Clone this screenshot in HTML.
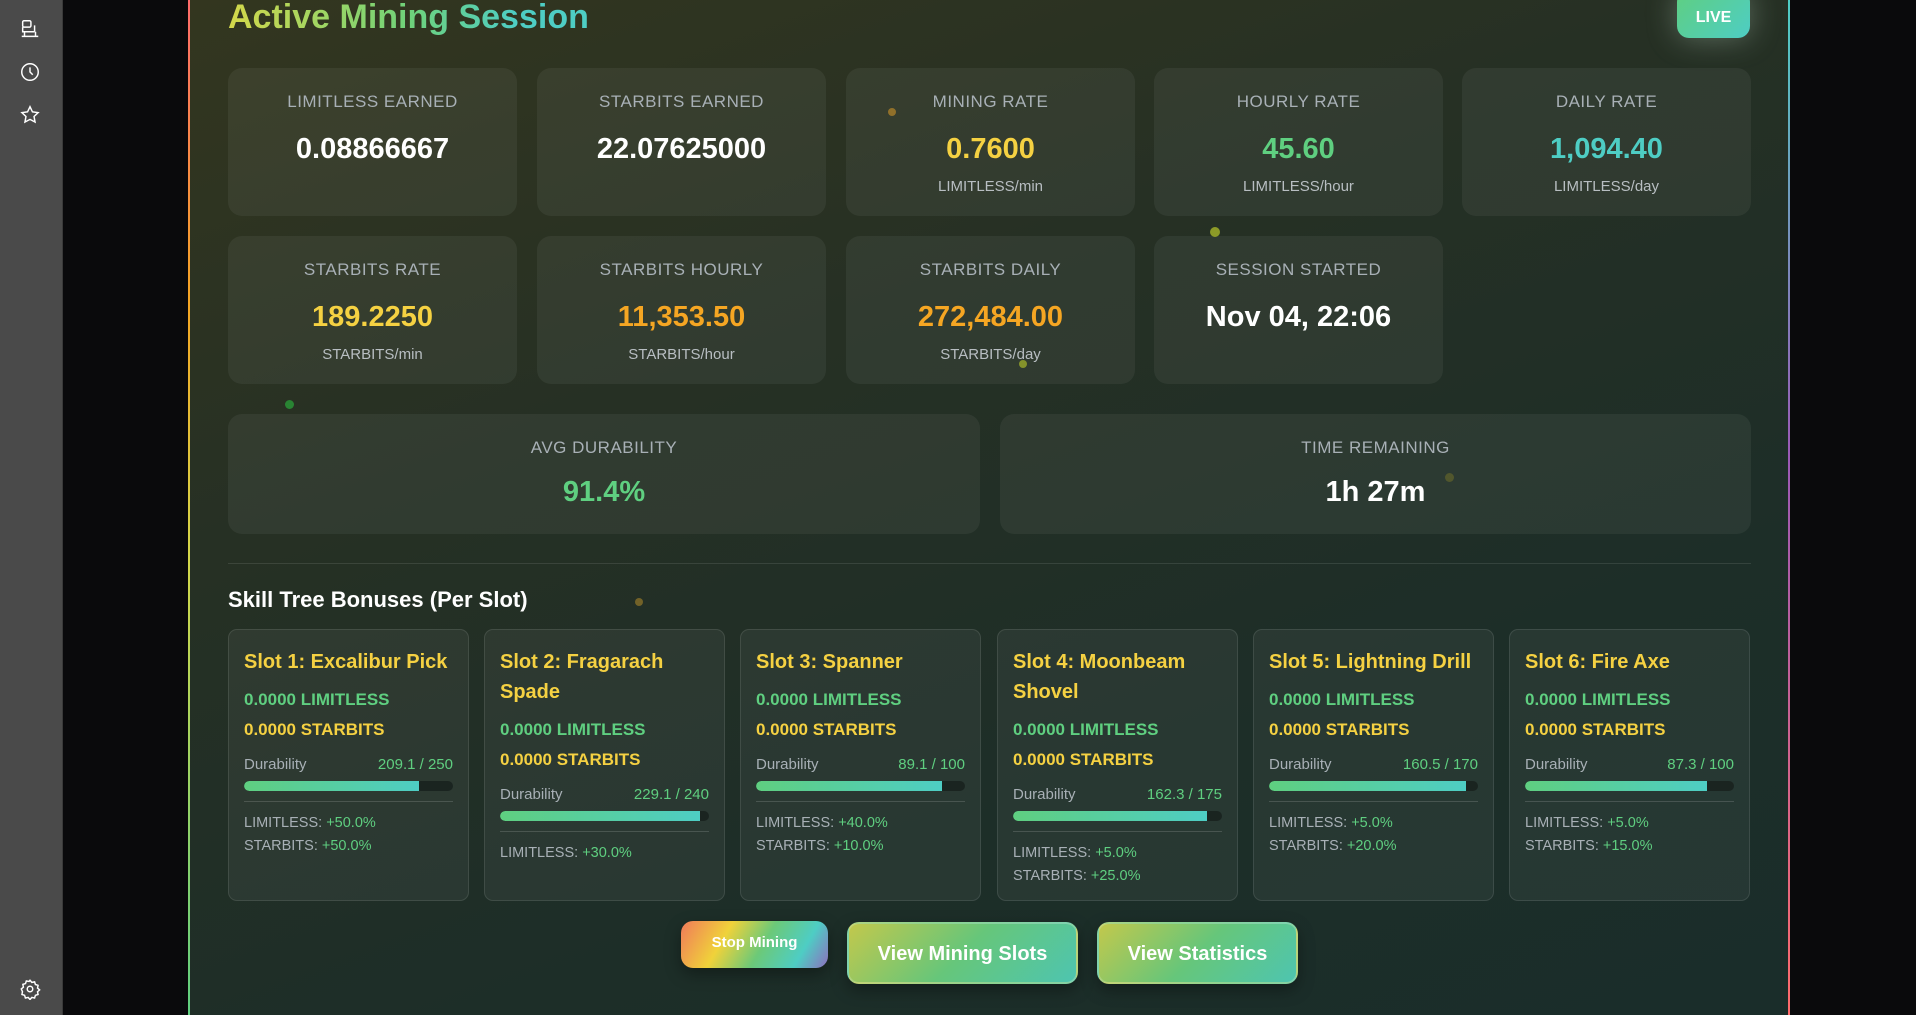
<!DOCTYPE html>
<html><head><meta charset="utf-8"><style>
*{box-sizing:border-box;margin:0;padding:0}
body{width:1916px;height:1015px;overflow:hidden;background:#0a0a0c;font-family:"Liberation Sans",sans-serif;position:relative}
.side{position:absolute;left:0;top:0;width:63px;height:1015px;background:#4a4a4a;border-right:1px solid #3a3a3a}
.side svg{position:absolute;left:19px;width:22px;height:22px;fill:none;stroke:#fff;stroke-width:1.6}
.lb{position:absolute;left:188px;top:0;width:2px;height:1015px;background:linear-gradient(#ff6b6b,#f5a623 30%,#d4d84a 55%,#5fcf80)}
.rb{position:absolute;left:1788px;top:0;width:2px;height:1015px;background:linear-gradient(#4ecdc4,#9b59b6 45%,#ff6b6b)}
.panel{position:absolute;left:190px;top:0;width:1598px;height:1015px;background:linear-gradient(160deg,#33361f 0%,#263024 35%,#1d2e28 70%,#1a2d2a 100%)}
.title{position:absolute;left:228px;top:-2px;font-size:34px;font-weight:bold;background:linear-gradient(90deg,#d4d84a,#6fd27a 50%,#4ecdc4 80%);-webkit-background-clip:text;color:transparent}
.live{position:absolute;left:1677px;top:-10px;width:73px;height:48px;border-radius:12px;background:linear-gradient(135deg,#5fcf80,#4ecdc4);color:#fff;font-weight:bold;font-size:16px;text-align:center;line-height:56px;box-shadow:0 0 30px rgba(200,230,210,.35)}
.card{position:absolute;width:289px;height:148px;border-radius:14px;background:rgba(255,255,255,.055);text-align:center}
.lab{position:absolute;left:0;right:0;top:93px;font-size:17px;color:#a8b0b6;letter-spacing:.5px}
.card .lab{top:24px}
.val{position:absolute;left:0;right:0;top:65px;font-size:29px;font-weight:bold;color:#fff}
.sub{position:absolute;left:0;right:0;top:110px;font-size:15px;color:#b8bec2}
.hr{position:absolute;left:228px;top:563px;width:1523px;height:1px;background:rgba(255,255,255,.1)}
.h2{position:absolute;left:228px;top:587px;font-size:22px;font-weight:bold;color:#fff}
.slot{position:absolute;top:629px;width:241px;height:272px;border-radius:9px;background:rgba(255,255,255,.05);border:1px solid rgba(255,255,255,.1);padding:17px 15px}
.st{font-size:20px;font-weight:bold;color:#f5d142;line-height:30px;margin-bottom:8px}
.l{font-size:17px;font-weight:bold;line-height:30px}
.g{color:#5fcf80}.y{color:#f5d142}.t{color:#4ecdc4}.o{color:#f5a623}
.dr{display:flex;justify-content:space-between;font-size:15px;color:#a8b0b6;margin-top:10px;line-height:20px}
.dr span:last-child{color:#5fcf80}
.bar{height:10px;border-radius:5px;background:#1a2420;margin-top:6px;overflow:hidden}
.bar div{height:100%;border-radius:5px 0 0 5px;background:linear-gradient(90deg,#5fcf80,#4ecdc4)}
.sep{height:1px;background:rgba(255,255,255,.15);margin-top:10px;margin-bottom:10px}
.b{font-size:14.5px;color:#a8b0b6;line-height:23px}
.b span{color:#5fcf80}
.btn{position:absolute;color:#fff;font-weight:bold;text-align:center;border-radius:12px;box-shadow:0 6px 16px rgba(0,0,0,.35)}
.dot{position:absolute;border-radius:50%}
</style></head><body>
<div class="side">
<svg style="top:18px" viewBox="0 0 24 24"><rect x="4" y="3" width="9" height="7" rx="1.5"/><path d="M4 10v5h13M17 8v7M3 20h18M6 15v5M18 15v5"/></svg>
<svg style="top:61px" viewBox="0 0 24 24"><circle cx="12" cy="12" r="9"/><path d="M12 7v5l3 3"/></svg>
<svg style="top:104px" viewBox="0 0 24 24"><path d="M12 3l2.7 5.6 6.1.8-4.4 4.2 1.1 6.1L12 16.8 6.5 19.7l1.1-6.1L3.2 9.4l6.1-.8z"/></svg>
<svg style="top:978px" viewBox="0 0 24 24"><circle cx="12" cy="12" r="3"/><path d="M12 2.5l2 2.3 3-.6.9 2.9 2.9.9-.6 3 2.3 2-2.3 2 .6 3-2.9.9-.9 2.9-3-.6-2 2.3-2-2.3-3 .6-.9-2.9-2.9-.9.6-3L2.5 12l2.3-2-.6-3 2.9-.9.9-2.9 3 .6z"/></svg>
</div>
<div class="panel"></div>
<div class="lb"></div><div class="rb"></div>
<div class="title">Active Mining Session</div>
<div class="live">LIVE</div>

<div class="card" style="left:228px;top:68px"><div class="lab">LIMITLESS EARNED</div><div class="val">0.08866667</div></div>
<div class="card" style="left:537px;top:68px"><div class="lab">STARBITS EARNED</div><div class="val">22.07625000</div></div>
<div class="card" style="left:846px;top:68px"><div class="lab">MINING RATE</div><div class="val y">0.7600</div><div class="sub">LIMITLESS/min</div></div>
<div class="card" style="left:1154px;top:68px"><div class="lab">HOURLY RATE</div><div class="val g">45.60</div><div class="sub">LIMITLESS/hour</div></div>
<div class="card" style="left:1462px;top:68px"><div class="lab">DAILY RATE</div><div class="val t">1,094.40</div><div class="sub">LIMITLESS/day</div></div>

<div class="card" style="left:228px;top:236px"><div class="lab">STARBITS RATE</div><div class="val y">189.2250</div><div class="sub">STARBITS/min</div></div>
<div class="card" style="left:537px;top:236px"><div class="lab">STARBITS HOURLY</div><div class="val o">11,353.50</div><div class="sub">STARBITS/hour</div></div>
<div class="card" style="left:846px;top:236px"><div class="lab">STARBITS DAILY</div><div class="val o">272,484.00</div><div class="sub">STARBITS/day</div></div>
<div class="card" style="left:1154px;top:236px"><div class="lab">SESSION STARTED</div><div class="val">Nov 04, 22:06</div></div>

<div class="card" style="left:228px;top:414px;width:752px;height:120px"><div class="lab">AVG DURABILITY</div><div class="val g" style="top:62px">91.4%</div></div>
<div class="card" style="left:1000px;top:414px;width:751px;height:120px"><div class="lab">TIME REMAINING</div><div class="val" style="top:62px">1h 27m</div></div>

<div class="hr"></div>
<div class="h2">Skill Tree Bonuses (Per Slot)</div>

<div class="slot" style="left:228px"><div class="st">Slot 1: Excalibur Pick</div><div class="l g">0.0000 LIMITLESS</div><div class="l y">0.0000 STARBITS</div><div class="dr"><span>Durability</span><span>209.1 / 250</span></div><div class="bar"><div style="width:83.6%"></div></div><div class="sep"></div><div class="b">LIMITLESS: <span>+50.0%</span></div><div class="b">STARBITS: <span>+50.0%</span></div></div>
<div class="slot" style="left:484px"><div class="st">Slot 2: Fragarach Spade</div><div class="l g">0.0000 LIMITLESS</div><div class="l y">0.0000 STARBITS</div><div class="dr"><span>Durability</span><span>229.1 / 240</span></div><div class="bar"><div style="width:95.5%"></div></div><div class="sep"></div><div class="b">LIMITLESS: <span>+30.0%</span></div></div>
<div class="slot" style="left:740px"><div class="st">Slot 3: Spanner</div><div class="l g">0.0000 LIMITLESS</div><div class="l y">0.0000 STARBITS</div><div class="dr"><span>Durability</span><span>89.1 / 100</span></div><div class="bar"><div style="width:89.1%"></div></div><div class="sep"></div><div class="b">LIMITLESS: <span>+40.0%</span></div><div class="b">STARBITS: <span>+10.0%</span></div></div>
<div class="slot" style="left:997px"><div class="st">Slot 4: Moonbeam Shovel</div><div class="l g">0.0000 LIMITLESS</div><div class="l y">0.0000 STARBITS</div><div class="dr"><span>Durability</span><span>162.3 / 175</span></div><div class="bar"><div style="width:92.7%"></div></div><div class="sep"></div><div class="b">LIMITLESS: <span>+5.0%</span></div><div class="b">STARBITS: <span>+25.0%</span></div></div>
<div class="slot" style="left:1253px"><div class="st">Slot 5: Lightning Drill</div><div class="l g">0.0000 LIMITLESS</div><div class="l y">0.0000 STARBITS</div><div class="dr"><span>Durability</span><span>160.5 / 170</span></div><div class="bar"><div style="width:94.4%"></div></div><div class="sep"></div><div class="b">LIMITLESS: <span>+5.0%</span></div><div class="b">STARBITS: <span>+20.0%</span></div></div>
<div class="slot" style="left:1509px"><div class="st">Slot 6: Fire Axe</div><div class="l g">0.0000 LIMITLESS</div><div class="l y">0.0000 STARBITS</div><div class="dr"><span>Durability</span><span>87.3 / 100</span></div><div class="bar"><div style="width:87.3%"></div></div><div class="sep"></div><div class="b">LIMITLESS: <span>+5.0%</span></div><div class="b">STARBITS: <span>+15.0%</span></div></div>

<div class="btn" style="left:681px;top:921px;width:147px;height:47px;font-size:15px;line-height:44px;background:linear-gradient(120deg,#f07a5a,#f0d23a 30%,#6cc978 55%,#4ecdc4 80%,#8e6fbf)">Stop Mining</div>
<div class="btn" style="left:847px;top:922px;width:231px;height:62px;font-size:20px;line-height:60px;background:linear-gradient(135deg,#c2c84c,#66c67a 50%,#4ec5b0);border:2px solid rgba(200,230,180,.4)">View Mining Slots</div>
<div class="btn" style="left:1097px;top:922px;width:201px;height:62px;font-size:20px;line-height:60px;background:linear-gradient(135deg,#c2c84c,#66c67a 50%,#4ec5b0);border:2px solid rgba(200,230,180,.4)">View Statistics</div>

<div class="dot" style="left:888px;top:108px;width:8px;height:8px;background:#b8862a;opacity:.7"></div>
<div class="dot" style="left:1210px;top:227px;width:10px;height:10px;background:#b8c82a;opacity:.7"></div>
<div class="dot" style="left:285px;top:400px;width:9px;height:9px;background:#2aa83a;opacity:.7"></div>
<div class="dot" style="left:1019px;top:360px;width:8px;height:8px;background:#a8b82a;opacity:.7"></div>
<div class="dot" style="left:635px;top:598px;width:8px;height:8px;background:#a8862a;opacity:.6"></div>
<div class="dot" style="left:1445px;top:473px;width:9px;height:9px;background:#6a6a2a;opacity:.6"></div>
</body></html>
